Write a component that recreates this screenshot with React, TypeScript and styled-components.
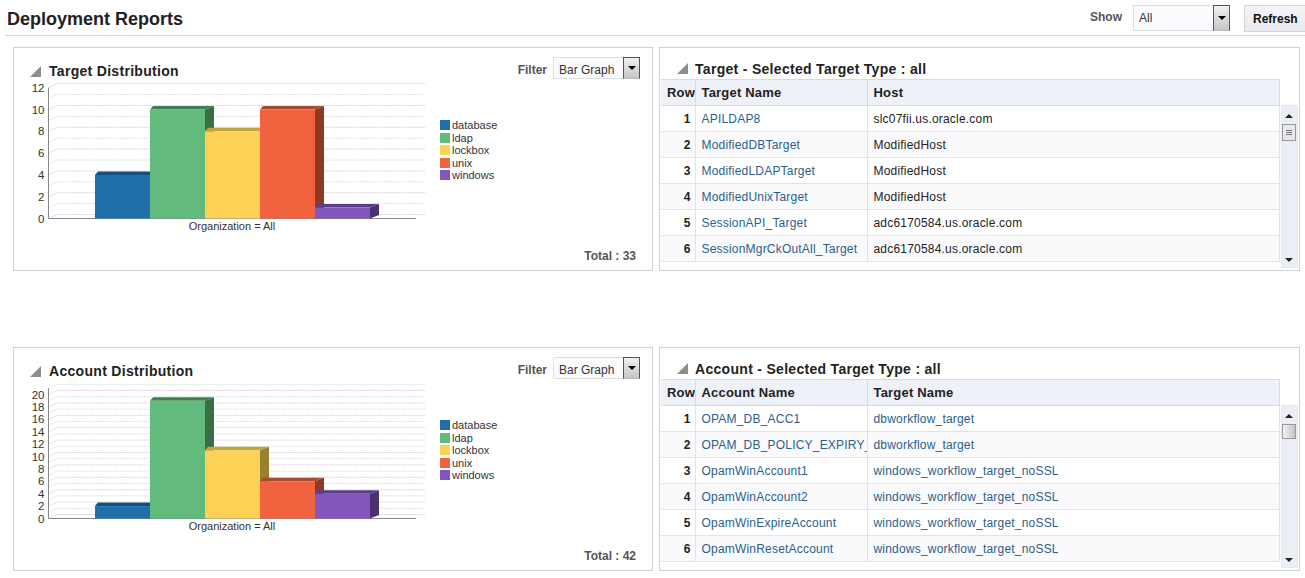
import styled, { createGlobalStyle } from 'styled-components';

const GlobalStyle = createGlobalStyle`
  html, body {
    margin: 0;
    padding: 0;
    background: #fff;
    overflow: hidden;
  }
  body {
    font-family: 'Liberation Sans', Arial, sans-serif;
    font-size: 12px;
    color: #333;
  }
`;

const SERIES = [
  { name: 'database', front: '#1f70a9', top: '#14507e', side: '#124468' },
  { name: 'ldap', front: '#63ba7d', top: '#3f7d52', side: '#3a6e48' },
  { name: 'lockbox', front: '#fbd256', top: '#c2a342', side: '#97812f' },
  { name: 'unix', front: '#f1623f', top: '#a94b31', side: '#8d3a25' },
  { name: 'windows', front: '#8256ba', top: '#5c3b89', side: '#4c3170' },
];

const Page = styled.div`
  width: 1305px;
  height: 578px;
  overflow: hidden;
`;

const Header = styled.header`
  display: flex;
  align-items: flex-start;
  height: 35px;
  margin-left: 5px;
  border-bottom: 1px solid #d4d8d8;
`;

const PageTitle = styled.h1`
  margin: 8px auto 0 2px;
  font-size: 18px;
  line-height: 22px;
  font-weight: bold;
  color: #222;
`;

const FieldLabel = styled.span`
  font-weight: bold;
  color: #555;
  line-height: 15px;
`;

const ShowLabel = styled(FieldLabel)`
  margin: 10px 11px 0 0;
`;

const SelectBox = styled.div<{ $width: number; $height: number; $textDrop: number }>`
  display: flex;
  justify-content: space-between;
  box-sizing: border-box;
  width: ${({ $width }) => $width}px;
  height: ${({ $height }) => $height}px;
  border: 1px solid #dcdfe4;
  border-right: 0;
  padding-left: 5px;
  line-height: ${({ $height, $textDrop }) => $height - 2 + $textDrop}px;
  background: #fbfbfd;
`;

const SelectArrow = styled.span`
  display: flex;
  align-items: center;
  justify-content: center;
  box-sizing: border-box;
  width: 17px;
  margin: -1px 0;
  border: 1px solid #555;
  border-bottom-color: #bbb;
  background: linear-gradient(#f0f0f2, #c4c6c8);

  &::after {
    content: '';
    border: 4px solid transparent;
    border-top: 4px solid #000;
    border-bottom: 0;
  }
`;

const ShowSelect = styled(SelectBox)`
  margin-top: 5px;
`;

const RefreshButton = styled.button`
  box-sizing: border-box;
  width: 64px;
  height: 27px;
  margin: 5px -3px 0 14px;
  padding: 0;
  border: 1px solid #d5d5d8;
  background: linear-gradient(#f6f3f6, #e9e9f0);
  font: bold 12px 'Liberation Sans', Arial, sans-serif;
  color: #111;
  text-align: left;
  text-indent: 8px;
`;

const Rows = styled.main`
  display: flex;
  flex-direction: column;
  gap: 76px;
  padding: 11px 6px 0 13px;
`;

const Row = styled.section`
  display: grid;
  grid-template-columns: 640px 641px;
  gap: 6px;
  height: 224px;
`;

const Panel = styled.div`
  display: flex;
  flex-direction: column;
  box-sizing: border-box;
  border: 1px solid #ccd4d0;
  background: #fff;
  overflow: hidden;
`;

const ChartHead = styled.div`
  display: flex;
  align-items: flex-start;
  height: 35px;
  padding: 9px 12px 0 16px;
  box-sizing: border-box;
`;

const Disclosure = styled.span`
  flex: none;
  width: 0;
  height: 0;
  border-left: 11px solid transparent;
  border-bottom: 11px solid #8d8d8d;
`;

const ChartDisclosure = styled(Disclosure)`
  margin-top: 9px;
`;

const PanelTitle = styled.h2`
  margin: 6px auto 0 8px;
  font-size: 14px;
  line-height: 17px;
  font-weight: bold;
  letter-spacing: 0.3px;
  color: #222;
`;

const FilterLabel = styled(FieldLabel)`
  margin: 6px 6px 0 0;
`;

const ChartBody = styled.div`
  display: flex;
  align-items: flex-start;
`;

const Plot = styled.svg`
  display: block;
  flex: none;
  width: 425px;
  height: 152px;
`;

const AxisText = styled.text`
  font-size: 11.5px;
  fill: #333;
`;

const CaptionText = styled(AxisText)`
  font-size: 11px;
`;

const Legend = styled.ul`
  margin: 36px 0 0 1px;
  padding: 0;
  list-style: none;
`;

const LegendItem = styled.li`
  display: flex;
  align-items: center;
  gap: 2px;
  height: 12.5px;
  font-size: 11px;
  color: #333;
`;

const Swatch = styled.span<{ $color: string }>`
  width: 10px;
  height: 10px;
  background: ${({ $color }) => $color};
`;

const Total = styled.div`
  margin: auto 16px 7px 0;
  text-align: right;
  font-weight: bold;
  color: #555;
`;

const TableHead = styled.div`
  display: flex;
  align-items: flex-end;
  height: 31px;
  padding-left: 17px;
  box-sizing: border-box;
`;

const TableDisclosure = styled(Disclosure)`
  margin-bottom: 5px;
`;

const TableTitle = styled.h2`
  margin: 0 0 2px 7px;
  font-size: 14px;
  line-height: 15px;
  font-weight: bold;
  letter-spacing: 0.3px;
  color: #222;
`;

const TableBody = styled.div`
  display: flex;
  flex: 1;
  min-height: 0;
  padding-left: 1px;
`;

const TableClip = styled.div`
  width: 619px;
  overflow: hidden;
`;

const DataTable = styled.table`
  width: 619px;
  table-layout: fixed;
  border-collapse: collapse;
`;

const HeadCell = styled.th<{ $width?: number }>`
  width: ${({ $width }) => ($width ? `${$width}px` : 'auto')};
  height: 26px;
  padding: 0 0 0 6px;
  box-sizing: border-box;
  border: 1px solid #d6dbe0;
  border-left: 0;
  background: #eff1f8;
  text-align: left;
  font-size: 13px;
  font-weight: bold;
  letter-spacing: 0.2px;
  color: #222;
  white-space: nowrap;
  overflow: hidden;
`;

const BodyRow = styled.tr<{ $shaded: boolean }>`
  background: ${({ $shaded }) => ($shaded ? '#fafafc' : '#fff')};
`;

const NumberCell = styled.td`
  height: 26px;
  padding: 0 4px 0 0;
  box-sizing: border-box;
  border-bottom: 1px solid #e0e3e8;
  border-right: 1px solid #e0e3e8;
  text-align: right;
  font-weight: bold;
  font-size: 12px;
  color: #222;
`;

const TextCell = styled.td<{ $link?: boolean }>`
  height: 26px;
  padding: 0 0 0 6px;
  box-sizing: border-box;
  border-bottom: 1px solid #e0e3e8;
  border-right: 1px solid #e0e3e8;
  white-space: nowrap;
  overflow: hidden;
  font-size: 12px;
  letter-spacing: 0.2px;
  color: ${({ $link }) => ($link ? '#2a5f8c' : '#222')};
`;

const ScrollColumn = styled.div`
  display: flex;
  flex-direction: column;
  width: 18px;
  padding-top: 26px;
  box-sizing: border-box;
  height: 189px;
`;

const ScrollTrack = styled.div`
  position: relative;
  flex: 1;
  margin-left: 1px;
  background: #ebeef4;
  border: 1px solid #e6e9ee;
`;

const ScrollArrow = styled.span<{ $down?: boolean }>`
  position: absolute;
  left: 3px;
  ${({ $down }) => ($down ? 'bottom: 5px;' : 'top: 8px;')}
  border: 4px solid transparent;
  ${({ $down }) =>
    $down
      ? 'border-top: 4px solid #222; border-bottom: 0;'
      : 'border-bottom: 4px solid #222; border-top: 0;'}
`;

const ScrollThumb = styled.span<{ $grip: boolean }>`
  position: absolute;
  top: 18px;
  left: 0;
  width: 14px;
  height: ${({ $grip }) => ($grip ? 17 : 15)}px;
  box-sizing: border-box;
  border: 1px solid #999;
  background: ${({ $grip }) =>
    $grip
      ? 'repeating-linear-gradient(#e6e6ea 0 1px, #777 1px 2px) center / 6px 7px no-repeat, #e8e8ec'
      : 'linear-gradient(90deg, #f2f2f4, #c4c4c6)'};
`;

type ChartProps = {
  values: number[];
  max: number;
  unit: number;
  step: number;
};

// page x - 14, panel top + 36 = y 0
const BAR_X = 81;
const BAR_W = 55;
const ZERO_Y = 135.5;
const AXIS_X = 34.5;

const BarChart = ({ values, max, unit, step }: ChartProps) => {
  const lines = Array.from({ length: max + 1 }, (_, i) => i);
  const labels = lines.filter((v) => v % step === 0);
  return (
    <Plot viewBox="0 0 425 152">
      {lines.map((v) => {
        const y = ZERO_Y - v * unit;
        return (
          <path
            key={v}
            d={`M${AXIS_X} ${y}L${AXIS_X + 9} ${y - 4}H412`}
            fill="none"
            stroke={v % 2 === 0 ? '#e4d0dc' : '#d6e6d8'}
            strokeDasharray="2 1"
          />
        );
      })}
      <path
        d={`M${AXIS_X} ${ZERO_Y - max * unit}V${ZERO_Y}H402`}
        fill="none"
        stroke="#8a8490"
      />
      {values.map((value, i) => {
        const s = SERIES[i];
        const x = BAR_X + i * BAR_W;
        const top = ZERO_Y - value * unit;
        return (
          <g key={s.name}>
            <polygon
              points={`${x},${top} ${x + 3},${top - 3.5} ${x + BAR_W + 9},${top - 3.5} ${x + BAR_W},${top}`}
              fill={s.top}
            />
            <polygon
              points={`${x + BAR_W},${top} ${x + BAR_W + 9},${top - 3.5} ${x + BAR_W + 9},${ZERO_Y - 3.5} ${x + BAR_W},${ZERO_Y}`}
              fill={s.side}
            />
            <rect x={x} y={top} width={BAR_W} height={ZERO_Y - top} fill={s.front} />
          </g>
        );
      })}
      {labels.map((v) => (
        <AxisText key={v} x={AXIS_X - 4} y={ZERO_Y - v * unit + 4} textAnchor="end">
          {v}
        </AxisText>
      ))}
      <CaptionText x={218} y={147} textAnchor="middle">
        Organization = All
      </CaptionText>
    </Plot>
  );
};

type ChartPanelProps = ChartProps & { title: string; total: number };

const ChartPanel = ({ title, total, ...chart }: ChartPanelProps) => (
  <Panel>
    <ChartHead>
      <ChartDisclosure />
      <PanelTitle>{title}</PanelTitle>
      <FilterLabel>Filter</FilterLabel>
      <SelectBox $width={87} $height={22} $textDrop={5}>
        Bar Graph
        <SelectArrow />
      </SelectBox>
    </ChartHead>
    <ChartBody>
      <BarChart {...chart} />
      <Legend>
        {SERIES.map((s) => (
          <LegendItem key={s.name}>
            <Swatch $color={s.front} />
            {s.name}
          </LegendItem>
        ))}
      </Legend>
    </ChartBody>
    <Total>Total : {total}</Total>
  </Panel>
);

type TablePanelProps = {
  title: string;
  columns: [string, string];
  rows: [string, string, boolean][];
  grip: boolean;
};

const TablePanel = ({ title, columns, rows, grip }: TablePanelProps) => (
  <Panel>
    <TableHead>
      <TableDisclosure />
      <TableTitle>{title}</TableTitle>
    </TableHead>
    <TableBody>
      <TableClip>
        <DataTable>
          <thead>
            <tr>
              <HeadCell $width={34}>Row</HeadCell>
              <HeadCell $width={172}>{columns[0]}</HeadCell>
              <HeadCell>{columns[1]}</HeadCell>
            </tr>
          </thead>
          <tbody>
            {rows.map(([name, other, otherLink], i) => (
              <BodyRow key={name} $shaded={i % 2 === 1}>
                <NumberCell>{i + 1}</NumberCell>
                <TextCell $link>{name}</TextCell>
                <TextCell $link={otherLink}>{other}</TextCell>
              </BodyRow>
            ))}
          </tbody>
        </DataTable>
      </TableClip>
      <ScrollColumn>
        <ScrollTrack>
          <ScrollArrow />
          <ScrollThumb $grip={grip} />
          <ScrollArrow $down />
        </ScrollTrack>
      </ScrollColumn>
    </TableBody>
  </Panel>
);

const TARGET_ROWS: [string, string, boolean][] = [
  ['APILDAP8', 'slc07fii.us.oracle.com', false],
  ['ModifiedDBTarget', 'ModifiedHost', false],
  ['ModifiedLDAPTarget', 'ModifiedHost', false],
  ['ModifiedUnixTarget', 'ModifiedHost', false],
  ['SessionAPI_Target', 'adc6170584.us.oracle.com', false],
  ['SessionMgrCkOutAll_Target', 'adc6170584.us.oracle.com', false],
];

const ACCOUNT_ROWS: [string, string, boolean][] = [
  ['OPAM_DB_ACC1', 'dbworkflow_target', true],
  ['OPAM_DB_POLICY_EXPIRY_A', 'dbworkflow_target', true],
  ['OpamWinAccount1', 'windows_workflow_target_noSSL', true],
  ['OpamWinAccount2', 'windows_workflow_target_noSSL', true],
  ['OpamWinExpireAccount', 'windows_workflow_target_noSSL', true],
  ['OpamWinResetAccount', 'windows_workflow_target_noSSL', true],
];

export default function App() {
  return (
    <Page>
      <GlobalStyle />
      <Header>
        <PageTitle>Deployment Reports</PageTitle>
        <ShowLabel>Show</ShowLabel>
        <ShowSelect $width={97} $height={26} $textDrop={0}>
          All
          <SelectArrow />
        </ShowSelect>
        <RefreshButton>Refresh</RefreshButton>
      </Header>
      <Rows>
        <Row>
          <ChartPanel
            title="Target Distribution"
            total={33}
            values={[4, 10, 8, 10, 1]}
            max={12}
            unit={10.9}
            step={2}
          />
          <TablePanel
            title="Target - Selected Target Type : all"
            columns={['Target Name', 'Host']}
            rows={TARGET_ROWS}
            grip
          />
        </Row>
        <Row>
          <ChartPanel
            title="Account Distribution"
            total={42}
            values={[2, 19, 11, 6, 4]}
            max={21}
            unit={6.2}
            step={2}
          />
          <TablePanel
            title="Account - Selected Target Type : all"
            columns={['Account Name', 'Target Name']}
            rows={ACCOUNT_ROWS}
            grip={false}
          />
        </Row>
      </Rows>
    </Page>
  );
}
